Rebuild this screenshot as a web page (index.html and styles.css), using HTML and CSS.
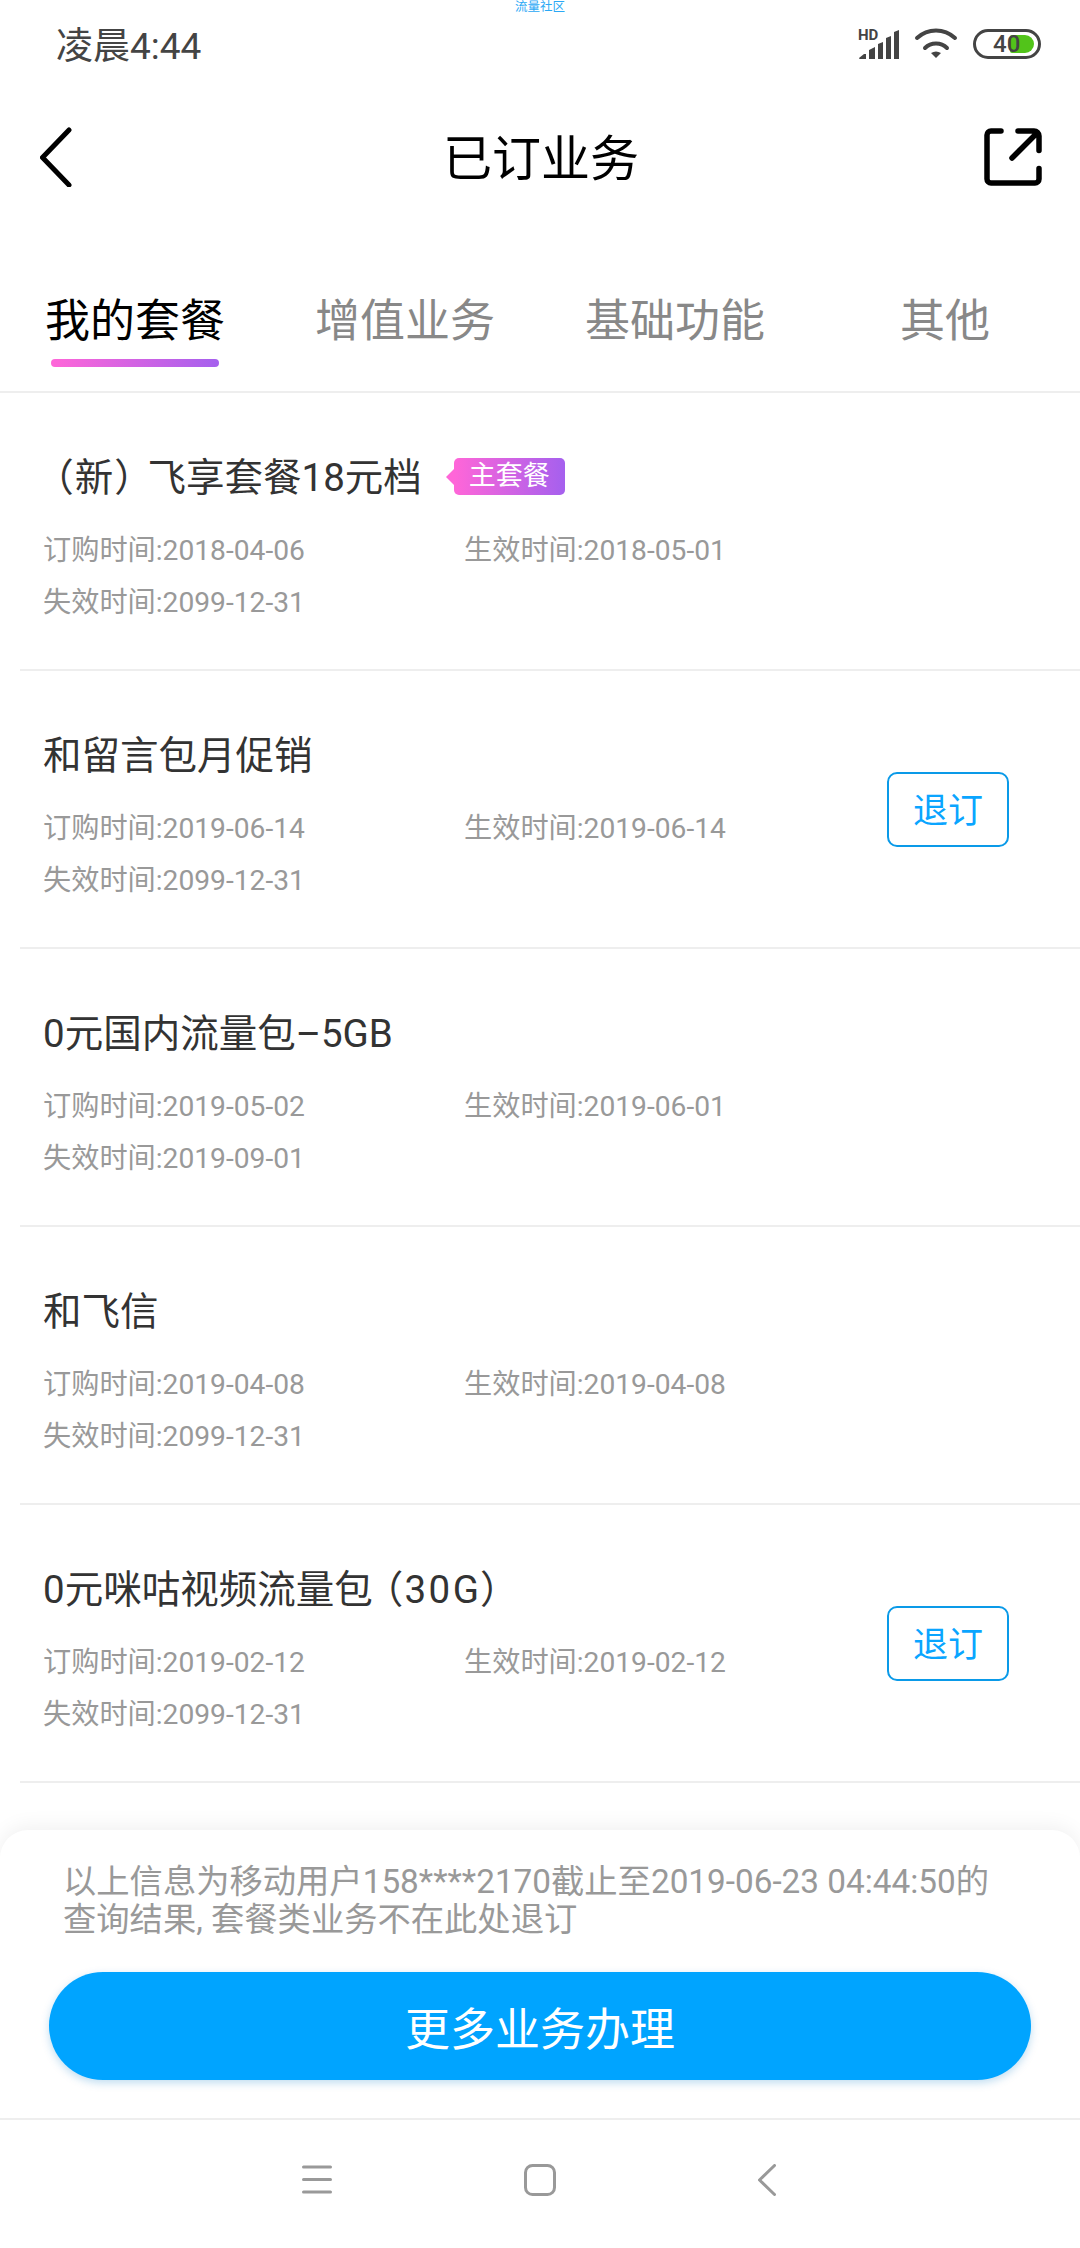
FILE: index.html
```html
<!DOCTYPE html>
<html lang="zh">
<head>
    <meta charset="UTF-8">
    <meta name="viewport" content="width=device-width, initial-scale=1.0">
    <title>已订业务</title>
    <link rel="stylesheet" href="styles.css">
</head>
<body>
    <div id="page">
        <div class="watermark">流量社区</div>
        <div class="status-bar">
            <span class="status-time">凌晨4:44</span>
            <div class="status-icons">
                <div class="signal">
                    <span class="hd-text">HD</span>
                    <svg width="42" height="31" viewBox="0 0 42 31">
                        <path d="M2 29l5-4h2v5H3a1 1 0 0 1-1-1zM12 30V21l6-3v12zM21 30V15l5-2v17zM29 30V9l5-2v23zM37 30V3l5-2v29z" fill="#444"/>
                    </svg>
                </div>
                <svg class="icon-wifi" width="44" height="32" viewBox="0 0 44 32">
                    <path d="M3 10C14 0 30 0 41 10M11 20C17 14 27 14 33 20" fill="none" stroke="#444" stroke-width="4" stroke-linecap="round"/>
                    <path d="M17 25Q22 22 27 25L22 30z" fill="#444"/>
                </svg>
                <div class="battery">
                    <div class="battery-fill"></div>
                    <span class="battery-num">40</span>
                </div>
            </div>
        </div>

        <div class="nav-bar">
            <svg class="icon-back" width="32" height="60" viewBox="0 0 32 60">
                <path d="M29 3L2.5 30.5 29 58" fill="none" stroke="#000" stroke-width="5" stroke-linecap="round" stroke-linejoin="round"/>
            </svg>
            <div class="nav-title">已订业务</div>
            <svg class="icon-share" width="58" height="58" viewBox="0 0 58 58">
                <path d="M17 3H7a4 4 0 0 0-4 4V51a4 4 0 0 0 4 4H51a4 4 0 0 0 4-4V40.500M34 3H50a5 5 0 0 1 5 5V22.500M53 5L28 30" fill="none" stroke="#000" stroke-width="5.500" stroke-linecap="round"/>
            </svg>
        </div>

        <div class="tabs">
            <div class="tab active">我的套餐</div>
            <div class="tab">增值业务</div>
            <div class="tab">基础功能</div>
            <div class="tab">其他</div>
        </div>

        <div class="list">
            <div class="row">
                <div class="row-main">
                    <div class="row-title"><span class="paren">（新）</span>飞享套餐18元档<span class="tag">主套餐</span></div>
                    <div class="meta">
                        <span>订购时间:2018-04-06</span><span>生效时间:2018-05-01</span>
                        <span>失效时间:2099-12-31</span>
                    </div>
                </div>
            </div>
            <div class="row">
                <div class="row-main">
                    <div class="row-title">和留言包月促销</div>
                    <div class="meta">
                        <span>订购时间:2019-06-14</span><span>生效时间:2019-06-14</span>
                        <span>失效时间:2099-12-31</span>
                    </div>
                </div>
                <button class="cancel-btn">退订</button>
            </div>
            <div class="row">
                <div class="row-main">
                    <div class="row-title">0元国内流量包–5GB</div>
                    <div class="meta">
                        <span>订购时间:2019-05-02</span><span>生效时间:2019-06-01</span>
                        <span>失效时间:2019-09-01</span>
                    </div>
                </div>
            </div>
            <div class="row">
                <div class="row-main">
                    <div class="row-title">和飞信</div>
                    <div class="meta">
                        <span>订购时间:2019-04-08</span><span>生效时间:2019-04-08</span>
                        <span>失效时间:2099-12-31</span>
                    </div>
                </div>
            </div>
            <div class="row">
                <div class="row-main">
                    <div class="row-title">0元咪咕视频流量包<span class="paren">（30G）</span></div>
                    <div class="meta">
                        <span>订购时间:2019-02-12</span><span>生效时间:2019-02-12</span>
                        <span>失效时间:2099-12-31</span>
                    </div>
                </div>
                <button class="cancel-btn">退订</button>
            </div>
        </div>

        <div class="sheet">
            <p class="sheet-note">以上信息为移动用户158****2170截止至2019-06-23 04:44:50的查询结果, 套餐类业务不在此处退订</p>
            <button class="more-btn">更多业务办理</button>
        </div>

        <div class="sys-nav">
            <svg width="30" height="32" viewBox="0 0 30 32">
                <path d="M1.500 3h27M1.500 15.500h27M1.500 28h27" stroke="#999" stroke-width="3" stroke-linecap="round"/>
            </svg>
            <svg width="32" height="32" viewBox="0 0 32 32">
                <rect x="1.500" y="1.500" width="29" height="29" rx="7" fill="none" stroke="#999" stroke-width="3"/>
            </svg>
            <svg class="sys-back" width="18" height="32" viewBox="0 0 18 32">
                <path d="M16.500 1.500L1.500 16l15 14.500" fill="none" stroke="#999" stroke-width="3" stroke-linecap="round" stroke-linejoin="round"/>
            </svg>
        </div>
    </div>
</body>
</html>
```

FILE: styles.css
```css
body {
    margin: 0;
    background-color: #fff;
    font-family: Roboto, "Noto Sans CJK SC", sans-serif;
    overflow: hidden;
}
#page {
    position: relative;
    width: 1080px;
    height: 2248px;
    display: flex;
    flex-direction: column;
    overflow: hidden;
}
button {
    font-family: inherit;
    background: none;
    cursor: pointer;
}

/* status bar */
.watermark {
    position: absolute;
    top: 0;
    left: 0;
    width: 100%;
    text-align: center;
    font-size: 12.500px;
    line-height: 14px;
    color: #2aa8f5;
}
.status-bar {
    height: 92px;
    flex: none;
    display: flex;
    justify-content: space-between;
    align-items: center;
    padding: 0 39px 6px 56px;
    box-sizing: border-box;
}
.status-time {
    font-size: 37px;
    color: #444;
}
.status-icons {
    display: flex;
    align-items: center;
    gap: 15px;
    margin-top: 2px;
}
.signal {
    position: relative;
    display: flex;
}
.hd-text {
    position: absolute;
    top: 0;
    left: 1px;
    font-size: 15px;
    line-height: 12px;
    font-weight: 700;
    color: #444;
}
.battery {
    position: relative;
    width: 68px;
    height: 30px;
    box-sizing: border-box;
    border: 3px solid #444;
    border-radius: 15px;
}
.battery-fill {
    position: absolute;
    top: 3px;
    right: 4px;
    width: 24px;
    height: 18px;
    background: #52c41a;
    border-radius: 2px 9px 9px 2px;
}
.battery-num {
    position: absolute;
    top: 0;
    left: 17px;
    font-size: 24px;
    line-height: 24px;
    font-weight: 500;
    color: #444;
}

/* title bar */
.nav-bar {
    height: 130px;
    flex: none;
    display: grid;
    grid-template-columns: 1fr auto 1fr;
    align-items: center;
    padding: 0 38px 0 40px;
    box-sizing: border-box;
}
.icon-share {
    justify-self: end;
}
.nav-title {
    font-size: 49px;
    color: #000;
    margin-top: -6px;
}

/* tabs */
.tabs {
    height: 171px;
    flex: none;
    display: grid;
    grid-template-columns: repeat(4, 1fr);
    box-sizing: border-box;
    border-bottom: 2px solid #eee;
}
.tab {
    position: relative;
    text-align: center;
    font-size: 45px;
    line-height: 60px;
    padding-top: 70px;
    color: #888;
}
.tab.active {
    color: #000;
}
.tab.active::after {
    content: '';
    position: absolute;
    left: 51px;
    width: 168px;
    top: 137px;
    height: 8px;
    border-radius: 4px;
    background: linear-gradient(to right, #ff66d8, #a560ee);
}

/* list */
.list {
    flex: 1;
    overflow: hidden;
    padding: 0 0 0 20px;
}
.row {
    height: 278px;
    box-sizing: border-box;
    border-bottom: 2px solid #eee;
    padding: 57px 71px 0 23px;
    display: flex;
    justify-content: space-between;
    align-items: flex-start;
}
.row-title {
    display: flex;
    align-items: center;
    font-size: 38.500px;
    line-height: 56px;
    color: #333;
}
.paren {
    font-feature-settings: "palt";
    letter-spacing: 2.500px;
    padding: 0 10px;
}
.tag {
    position: relative;
    margin-left: 32px;
    margin-bottom: 4px;
    padding: 0 15px;
    font-size: 27px;
    line-height: 37px;
    color: #fff;
    border-radius: 5px;
    background: linear-gradient(to right, #ff66d8, #a560ee);
}
.tag::before {
    content: '';
    position: absolute;
    left: -8px;
    top: 11px;
    border-style: solid;
    border-width: 8px 8px 8px 0;
    border-color: transparent #ff66d8 transparent transparent;
}
.meta {
    display: grid;
    grid-template-columns: 421px auto;
    margin-top: 19px;
    font-size: 28.200px;
    line-height: 52px;
    color: #999;
}
.cancel-btn {
    width: 122px;
    height: 75px;
    margin-top: 44px;
    padding: 0 0 4px;
    border: 2px solid #0a9ae8;
    border-radius: 10px;
    font-size: 35px;
    color: #0aa5ff;
}

/* bottom sheet */
.sheet {
    position: absolute;
    left: 0;
    right: 0;
    top: 1830px;
    height: 288px;
    box-sizing: border-box;
    background: #fff;
    border-radius: 28px 28px 0 0;
    box-shadow: 0 -4px 20px rgba(0, 0, 0, 0.06);
    padding: 33px 49px 0;
}
.sheet-note {
    margin: 0 16px 0 14px;
    font-size: 33.300px;
    line-height: 38px;
    color: #999;
}
.more-btn {
    display: block;
    width: 100%;
    height: 108px;
    margin-top: 33px;
    border: none;
    border-radius: 54px;
    background: #00a4ff;
    box-shadow: 0 3px 8px rgba(0, 120, 200, 0.25);
    color: #fff;
    font-size: 45px;
}
.sys-nav {
    position: absolute;
    left: 0;
    right: 0;
    top: 2118px;
    height: 130px;
    box-sizing: border-box;
    background: #fff;
    border-top: 2px solid #eee;
    display: flex;
    justify-content: center;
    align-items: center;
    gap: 192px;
    padding: 0 2px 8px 0;
}
.sys-back {
    margin-left: 10px;
}
```
